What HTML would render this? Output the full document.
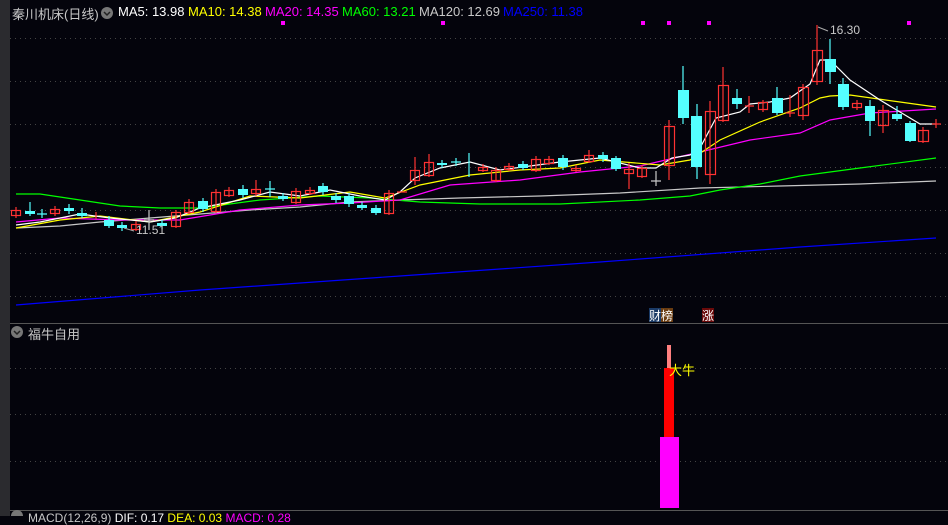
<!DOCTYPE html>
<html><head><meta charset="utf-8"><style>
body{margin:0;width:948px;height:516px;background:#04040c;overflow:hidden;font-family:"Liberation Sans","Noto Sans CJK SC",sans-serif;position:relative}
.t{position:absolute;font-size:13px;white-space:nowrap}
</style></head><body>
<svg width="948" height="516" style="position:absolute;left:0;top:0">
<rect x="0" y="0" width="10" height="516" fill="#2b2b2f"/>
<g stroke="#444" stroke-dasharray="1,4" stroke-width="1">
<line x1="10" y1="38.5" x2="948" y2="38.5"/><line x1="10" y1="81.5" x2="948" y2="81.5"/><line x1="10" y1="124.5" x2="948" y2="124.5"/><line x1="10" y1="167.5" x2="948" y2="167.5"/><line x1="10" y1="210.5" x2="948" y2="210.5"/><line x1="10" y1="253.5" x2="948" y2="253.5"/><line x1="10" y1="296.5" x2="948" y2="296.5"/>
<line x1="10" y1="368.5" x2="948" y2="368.5"/><line x1="10" y1="414.5" x2="948" y2="414.5"/><line x1="10" y1="461.5" x2="948" y2="461.5"/>
</g>
<line x1="10" y1="323.5" x2="948" y2="323.5" stroke="#555"/>
<line x1="10" y1="510.5" x2="948" y2="510.5" stroke="#555"/>
<g fill="#ff00ff"><rect x="281" y="21" width="4" height="4"/><rect x="441" y="21" width="4" height="4"/><rect x="641" y="21" width="4" height="4"/><rect x="667" y="21" width="4" height="4"/><rect x="707" y="21" width="4" height="4"/><rect x="907" y="21" width="4" height="4"/></g>
<g fill="none" stroke-width="1.2">
<polyline stroke="#0000ff" points="16,305 200,290 400,276 600,262 800,247 936,238"/>
<polyline stroke="#c8c8c8" points="16,228 60,226 100,222 150,218 200,214 250,210 300,207 350,202 400,200 460,198 540,196 620,193 700,188 780,186 860,184 936,181"/>
<polyline stroke="#00ff00" points="16,194 40,194 80,200 120,206 160,208 200,208 260,200 320,196 370,198 420,202 480,204 560,204 640,200 690,196 720,190 760,184 800,176 860,168 936,158"/>
<polyline stroke="#ff00ff" points="16,222 60,218 120,220 180,220 240,210 300,205 350,203 400,200 450,185 520,180 580,172 640,166 700,152 750,140 800,133 830,120 870,113 936,109"/>
<polyline stroke="#ffff00" points="16,228 60,220 100,216 150,222 200,212 250,196 300,198 350,192 385,198 420,185 470,175 520,170 560,168 600,160 660,165 690,160 720,140 760,122 800,108 820,98 830,96 850,95 900,102 936,107"/>
<polyline stroke="#ffffff" points="16,225 40,222 80,214 110,218 150,222 175,218 200,208 240,200 270,192 300,196 330,190 360,196 385,200 400,192 415,178 440,168 470,162 500,170 530,166 560,162 600,158 640,168 656,168 672,158 690,155 700,148 716,118 740,112 750,104 770,102 790,98 810,84 820,60 830,60 850,80 880,100 900,112 920,124 936,124"/>
</g>
<g stroke="#ff3232" fill="none" stroke-width="1.2">
<path d="M16 207V218M55 206V216M96 212V219M136 221V231M176 210V228M189 199V214M216 189V213M229 187V197M256 180V196M296 188V204M310 187V195M389 190V215M402 192V192M415 157V185M429 154V177M483 164V172M496 167V182M509 163V171M536 156V172M549 156V165M576 165V172M589 150V163M629 163V189M642 165V178M669 120V180M710 101V184M723 67V122M749 96V113M763 100V112M790 95V117M803 84V120M817 25V85M857 100V110M883 105V133M923 127V143M936 119V128"/>
<path d="M397 192H407M745 106H754M786 113H795M932 124H941"/>
<rect x="11.5" y="210.5" width="9" height="5"/><rect x="50.5" y="209.5" width="9" height="4"/><rect x="131.5" y="224.5" width="9" height="5"/><rect x="171.5" y="212.5" width="9" height="14"/><rect x="184.5" y="202.5" width="9" height="10"/><rect x="211.5" y="192.5" width="9" height="19"/><rect x="224.5" y="190.5" width="9" height="5"/><rect x="251.5" y="189.5" width="9" height="4"/><rect x="291.5" y="191.5" width="9" height="11"/><rect x="305.5" y="190.5" width="9" height="3"/><rect x="384.5" y="193.5" width="9" height="20"/><rect x="410.5" y="170.5" width="9" height="10"/><rect x="424.5" y="162.5" width="9" height="13"/><rect x="478.5" y="167.5" width="9" height="3"/><rect x="491.5" y="170.5" width="9" height="10"/><rect x="504.5" y="166.5" width="9" height="3"/><rect x="531.5" y="159.5" width="9" height="11"/><rect x="544.5" y="159.5" width="9" height="4"/><rect x="571.5" y="168.5" width="9" height="2"/><rect x="584.5" y="155.5" width="9" height="6"/><rect x="624.5" y="169.5" width="9" height="4"/><rect x="637.5" y="168.5" width="9" height="8"/><rect x="664.5" y="126.5" width="10" height="39"/><rect x="705.5" y="111.5" width="10" height="63"/><rect x="718.5" y="85.5" width="10" height="35"/><rect x="758.5" y="102.5" width="9" height="7"/><rect x="798.5" y="87.5" width="10" height="28"/><rect x="812.5" y="50.5" width="10" height="31"/><rect x="852.5" y="103.5" width="9" height="4"/><rect x="878.5" y="110.5" width="10" height="15"/><rect x="918.5" y="130.5" width="10" height="11"/>
</g>
<g stroke="#54ffff" stroke-width="1.2"><path d="M30 202V216M42 209V218M69 204V214M82 208V218M109 216V228M122 222V231M162 220V229M203 198V212M243 185V198M270 181V197M283 193V201M323 183V195M336 193V203M349 193V207M362 202V210M376 205V215M442 160V168M456 158V166M469 153V177M523 161V170M563 155V170M603 152V162M616 156V171M683 66V124M697 104V179M737 89V109M777 87V115M830 39V84M843 78V110M870 100V136M897 106V121M910 121V142"/><path d="M37 214H47M451 162H461M265 189H275"/></g>
<g fill="#54ffff"><rect x="25" y="211" width="10" height="3"/><rect x="64" y="208" width="10" height="3"/><rect x="77" y="213" width="10" height="3"/><rect x="104" y="220" width="10" height="6"/><rect x="117" y="225" width="10" height="3"/><rect x="157" y="223" width="10" height="3"/><rect x="198" y="201" width="10" height="8"/><rect x="238" y="189" width="10" height="6"/><rect x="278" y="196" width="10" height="3"/><rect x="318" y="186" width="10" height="6"/><rect x="331" y="196" width="10" height="4"/><rect x="344" y="196" width="10" height="8"/><rect x="357" y="205" width="10" height="3"/><rect x="371" y="208" width="10" height="5"/><rect x="437" y="163" width="10" height="2"/><rect x="518" y="164" width="10" height="4"/><rect x="558" y="158" width="10" height="9"/><rect x="598" y="155" width="10" height="4"/><rect x="611" y="158" width="10" height="11"/><rect x="678" y="90" width="11" height="28"/><rect x="691" y="116" width="11" height="51"/><rect x="732" y="98" width="10" height="6"/><rect x="772" y="98" width="11" height="15"/><rect x="825" y="59" width="11" height="13"/><rect x="838" y="84" width="11" height="23"/><rect x="865" y="106" width="10" height="15"/><rect x="892" y="114" width="10" height="5"/><rect x="905" y="123" width="11" height="18"/></g>
<g stroke="#c8c8c8" stroke-width="1.2"><path d="M149 210V230M144 220H154M656 171V186M651 181H661"/></g>
<path d="M818 27 L828 31" stroke="#aaa"/><path d="M124 228 L134 231" stroke="#aaa"/>
<rect x="660" y="437" width="19" height="71" fill="#ff00ff"/>
<rect x="664" y="368" width="10" height="69" fill="#ff0000"/>
<rect x="667" y="345" width="4" height="23" fill="#ff8080"/>
<rect x="649" y="308" width="12" height="14" fill="#1a3a66"/><rect x="661" y="308" width="12" height="14" fill="#6a3c10"/><rect x="702" y="308" width="12" height="14" fill="#6a0a0a"/>
<circle cx="17" cy="332" r="6" fill="#777"/><path d="M14 331l3 3 3-3" stroke="#222" fill="none" stroke-width="1.5"/>
<circle cx="107" cy="13" r="6" fill="#777"/><path d="M104 12l3 3 3-3" stroke="#222" fill="none" stroke-width="1.5"/>
<circle cx="17" cy="516" r="6" fill="#777"/>
</svg>
<div class="t" style="left:12px;top:4px;color:#c8c8c8">秦川机床(日线)</div>
<div class="t" style="left:118px;top:4px;color:#fff">MA5: 13.98</div>
<div class="t" style="left:188px;top:4px;color:#ffff00">MA10: 14.38</div>
<div class="t" style="left:265px;top:4px;color:#ff00ff">MA20: 14.35</div>
<div class="t" style="left:342px;top:4px;color:#00ff00">MA60: 13.21</div>
<div class="t" style="left:419px;top:4px;color:#c8c8c8">MA120: 12.69</div>
<div class="t" style="left:503px;top:4px;color:#0000ff">MA250: 11.38</div>
<div class="t" style="left:830px;top:23px;color:#c8c8c8;font-size:12px">16.30</div>
<div class="t" style="left:136px;top:223px;color:#c8c8c8;font-size:12px">11.51</div>
<div class="t" style="left:649px;top:307px;color:#fff;font-size:12px">财榜</div>
<div class="t" style="left:702px;top:307px;color:#fff;font-size:12px">涨</div>
<div class="t" style="left:28px;top:324px;color:#c8c8c8">福牛自用</div>
<div class="t" style="left:669px;top:360px;color:#ffff00">大牛</div>
<div class="t" style="left:28px;top:511px;color:#c8c8c8;font-size:12px">MACD(12,26,9) <span style="color:#fff">DIF: 0.17</span> <span style="color:#ff0">DEA: 0.03</span> <span style="color:#f0f">MACD: 0.28</span></div>
</body></html>
